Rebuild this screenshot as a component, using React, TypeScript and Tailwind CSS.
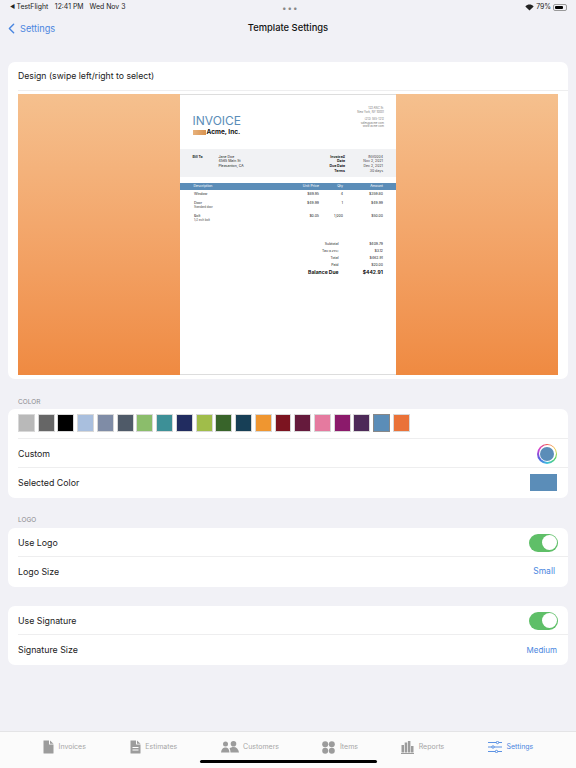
import { ChevronLeft } from "lucide-react"

const swatches = [
  "#b9b9b9", "#666666", "#000000", "#a9bfde", "#7f8ca6", "#4f5a68", "#8bbd6b", "#3d9097", "#212c60",
  "#a0bd4a", "#38642a", "#173f56", "#ef9630", "#7c1420", "#651a3c", "#e57a9f", "#8b1a6b", "#4d2a58",
  "#5b8db8", "#ea7238",
]

const lineItems = [
  { name: "Window", note: "", price: "$89.95", qty: "4", amount: "$359.80", height: "h-[9px]" },
  { name: "Door", note: "Standard door", price: "$49.99", qty: "1", amount: "$49.99", height: "h-[13px]" },
  { name: "Bolt", note: "1/2 inch bolt", price: "$0.05", qty: "1,000", amount: "$50.00", height: "h-[13px]" },
]

const totals = [
  { label: "Subtotal", value: "$409.79" },
  { label: "Tax", value: "$3.12" },
  { label: "Total", value: "$462.91" },
  { label: "Paid", value: "$20.00" },
]

function StatusBar() {
  return (
    <div className="relative flex h-[15px] items-center justify-between pl-[10px] pr-[9px] text-[6.900px] text-[#222]">
      <div className="flex items-center">
        <span className="mr-[1.500px] text-[5.500px]">◀</span>
        <span>TestFlight</span>
        <span className="ml-[6.500px]">12:41 PM</span>
        <span className="ml-[6px]">Wed Nov 3</span>
      </div>
      <div className="absolute left-[282px] top-[2px] text-[8px] tracking-[1px] text-[#888]">•••</div>
      <div className="flex items-center">
        <svg width="9" height="7" viewBox="0 0 20 16" className="mr-[2px]">
          <path d="M10 15 L0.500 5.500 C6 0 14 0 19.500 5.500Z" fill="#222" />
        </svg>
        <span>79%</span>
        <div className="ml-[2px] flex h-[7px] w-[14px] items-center rounded-[2px] border border-[#999] p-[1px]">
          <div className="h-full w-[80%] rounded-[1px] bg-black" />
        </div>
      </div>
    </div>
  )
}

function Toggle() {
  return (
    <div className="flex h-[18px] w-[29px] items-center justify-end rounded-full bg-[#5fbf68] pr-[1.500px]">
      <div className="h-[15px] w-[15px] rounded-full bg-white" />
    </div>
  )
}

function Row({ label, children, border }: { label: string; children: React.ReactNode; border?: boolean }) {
  return (
    <div className={`ml-[10px] flex h-[29.500px] items-center justify-between pr-[10px] ${border ? "border-b border-[#eeeeef] pt-[1.500px]" : ""}`}>
      <span className="text-[8.800px] text-[#222]">{label}</span>
      {children}
    </div>
  )
}

function InvoicePage() {
  return (
    <div className="h-[281px] w-[216px] border-y border-[#dddddd] bg-white text-[#222]">
      <div className="flex h-[54px] justify-between pl-[12.500px] pr-[12px]">
        <div className="pt-[19px]">
          <div className="text-[12px] leading-[14px] text-[#5b8db8]">INVOICE</div>
          <div className="flex items-center">
            <div className="mr-[1px] h-[5px] w-[13px] bg-gradient-to-r from-[#e8b27c] to-[#d8924e]" />
            <span className="text-[6.500px] font-bold leading-[9px] text-[#111]">Acme, Inc.</span>
          </div>
        </div>
        <div className="pt-[12px] text-right text-[2.800px] leading-[3.500px] text-[#777]">
          <div>123 ANC St.</div>
          <div>New York, NY 10001</div>
          <div className="mt-[4px]">(212) 555-1212</div>
          <div>sales@acme.com</div>
          <div>www.acme.com</div>
        </div>
      </div>

      <div className="flex h-[28px] bg-[#f1f2f4] pl-[12.500px] pr-[13px] pt-[5.500px] text-[3.500px] leading-[4.700px]">
        <div className="w-[26px] font-bold">Bill To</div>
        <div className="flex-1">
          <div>Jane Doe</div>
          <div>4565 Main St</div>
          <div>Pleasanton, CA</div>
        </div>
        <div className="w-[19px] text-right font-bold">
          <div>Invoice#</div>
          <div>Date</div>
          <div>Due Date</div>
          <div>Terms</div>
        </div>
        <div className="w-[38px] text-right text-[#444]">
          <div>INV0004</div>
          <div>Nov 2, 2021</div>
          <div>Dec 2, 2021</div>
          <div>30 days</div>
        </div>
      </div>

      <div className="mt-[6px] flex h-[6.500px] items-center bg-[#5b8db8] pl-[13.500px] pr-[13px] text-[3.500px] text-white">
        <div className="flex-1">Description</div>
        <div className="w-[25px] text-right">Unit Price</div>
        <div className="w-[24px] text-right">Qty</div>
        <div className="w-[40px] text-right">Amount</div>
      </div>

      <div className="pt-[2px]">
        {lineItems.map((item) => (
          <div key={item.name} className={`flex pl-[14px] pr-[13px] text-[3.500px] leading-[5px] ${item.height}`}>
            <div className="flex-1">
              <div>{item.name}</div>
              {item.note && <div className="text-[2.800px] leading-[3.500px] text-[#444]">{item.note}</div>}
            </div>
            <div className="w-[25px] text-right">{item.price}</div>
            <div className="w-[24px] text-right">{item.qty}</div>
            <div className="w-[40px] text-right">{item.amount}</div>
          </div>
        ))}
      </div>

      <div className="mt-[14px] pr-[13px] text-[3.500px] leading-[7px]">
        {totals.map((row) => (
          <div key={row.label} className="flex justify-end">
            <div className="mr-[1.500px] text-right">
              {row.label}
              {row.label === "Tax" && <span className="text-[2.600px]"> (6.25%)</span>}
            </div>
            <div className="w-[43px] text-right">{row.value}</div>
          </div>
        ))}
        <div className="flex justify-end text-[5px] font-bold leading-[7px] text-[#111]">
          <div className="mr-[1.500px]">Balance Due</div>
          <div className="w-[43px] text-right">$442.91</div>
        </div>
      </div>
    </div>
  )
}

function TabIcon({ name }: { name: string }) {
  if (name === "Invoices") {
    return (
      <svg width="11" height="14" viewBox="0 0 11 14" fill="#9c9c9c">
        <path d="M0.500 0.500 H6 V4.500 H10.500 V13 a0.500 0.500 0 0 1 -0.500 0.500 H1 a0.500 0.500 0 0 1 -0.500 -0.500Z" />
        <path d="M7 0.500 L10.500 3.700 H7Z" />
      </svg>
    )
  }
  if (name === "Estimates") {
    return (
      <svg width="11" height="14" viewBox="0 0 11 14" fill="#9c9c9c">
        <path d="M0.500 0.500 H6 V4.500 H10.500 V13 a0.500 0.500 0 0 1 -0.500 0.500 H1 a0.500 0.500 0 0 1 -0.500 -0.500Z" />
        <path d="M7 0.500 L10.500 3.700 H7Z" />
        <rect x="2.500" y="7" width="6" height="1" fill="#fff" />
        <rect x="2.500" y="9.500" width="6" height="1" fill="#fff" />
      </svg>
    )
  }
  if (name === "Customers") {
    return (
      <svg width="18" height="12" viewBox="0 0 18 12" fill="#9c9c9c">
        <circle cx="4.500" cy="3" r="2.500" />
        <circle cx="12.500" cy="2.800" r="2.800" />
        <path d="M0 11.500 C0.500 7.500 2.500 6.500 4.500 6.500 C6.500 6.500 8 7.500 8.500 11.500Z" />
        <path d="M8.500 7.500 C9.500 6.500 11 6 12.500 6 C15.500 6 17.500 8 18 11.500 H9.500 C9.500 10 9.200 8.500 8.500 7.500Z" />
      </svg>
    )
  }
  if (name === "Items") {
    return (
      <svg width="13" height="13" viewBox="0 0 13 13" fill="#9c9c9c">
        <circle cx="3.200" cy="3.200" r="3" />
        <circle cx="9.800" cy="3.200" r="3" />
        <circle cx="3.200" cy="9.800" r="3" />
        <circle cx="9.800" cy="9.800" r="3" />
      </svg>
    )
  }
  if (name === "Reports") {
    return (
      <svg width="13" height="13" viewBox="0 0 13 13" fill="#9c9c9c">
        <rect x="0.500" y="4" width="2.500" height="7.500" />
        <rect x="3.700" y="1.500" width="2.500" height="10" />
        <rect x="6.900" y="0" width="2.500" height="11.500" />
        <rect x="10" y="5" width="2.500" height="6.500" />
        <rect x="0" y="12" width="13" height="1" />
      </svg>
    )
  }
  return (
    <svg width="14" height="12" viewBox="0 0 14 12" fill="none" stroke="#4a86e0" strokeWidth="0.900">
      <path d="M0 1.500 H14 M0 6 H14 M0 10.500 H14" />
      <circle cx="9.500" cy="1.500" r="1.200" fill="#fff" />
      <circle cx="5" cy="6" r="1.200" fill="#fff" />
      <circle cx="8.500" cy="10.500" r="1.200" fill="#fff" />
    </svg>
  )
}

// label widths are fixed so the tabs land where the reference has them
const tabs = [
  { name: "Invoices", label: "w-[28px]" },
  { name: "Estimates", label: "w-[32px]" },
  { name: "Customers", label: "w-[36px]" },
  { name: "Items", label: "w-[18px]" },
  { name: "Reports", label: "w-[26px]" },
  { name: "Settings", label: "w-[28px]" },
]

export default function App() {
  return (
    <div className="relative flex h-[768px] w-[576px] flex-col overflow-hidden bg-[#f1f1f6] font-['Inter',sans-serif]">
      <StatusBar />

      <div className="relative mt-[5px] flex h-[16px] items-center justify-center">
        <div className="absolute left-[3px] top-0 flex items-center text-[#4a86e0]">
          <ChevronLeft size={17} strokeWidth={2} />
          <span className="text-[9.200px]">Settings</span>
        </div>
        <span className="text-[9.400px] font-medium text-[#111]">Template Settings</span>
      </div>

      <div className="mx-[8px] mt-[26px] rounded-[7px] bg-white">
        <div className="ml-[10px] flex h-[28.500px] items-center border-b border-[#eeeeef] pt-[1px] text-[8.700px] text-[#222]">
          Design (swipe left/right to select)
        </div>
        <div className="px-[10px] pb-[4px] pt-[3.500px]">
          <div className="flex h-[281px] justify-center bg-gradient-to-b from-[#f5c08e] to-[#ef8a41]">
            <InvoicePage />
          </div>
        </div>
      </div>

      <div className="ml-[18px] mt-[19px] text-[6.500px] leading-[9px] text-[#8a8a8e]">COLOR</div>
      <div className="mx-[8px] mt-[2px] rounded-[7px] bg-white">
        <div className="ml-[10px] flex h-[29.500px] items-center gap-[2.850px] border-b border-[#eeeeef]">
          {swatches.map((color) => (
            <div
              key={color}
              className={`h-[18px] w-[16.900px] border-[1px] ${color === "#5b8db8" ? "border-[#888]" : "border-[#d8d8d8]"}`}
              style={{ backgroundColor: color }}
            />
          ))}
        </div>
        <Row label="Custom" border>
          <div className="mr-[1px] flex h-[20px] w-[20px] items-center justify-center rounded-full bg-[conic-gradient(#f05050,#f0d040,#50d060,#40c0e0,#5060e0,#d040d0,#f05050)]">
            <div className="flex h-[17px] w-[17px] items-center justify-center rounded-full bg-white">
              <div className="h-[14px] w-[14px] rounded-full bg-[#5b8db8]" />
            </div>
          </div>
        </Row>
        <Row label="Selected Color">
          <div className="mr-[1px] h-[17px] w-[27px] bg-[#5b8db8]" />
        </Row>
      </div>

      <div className="ml-[18px] mt-[18px] text-[6.500px] leading-[9px] text-[#8a8a8e]">LOGO</div>
      <div className="mx-[8px] mt-[3px] rounded-[7px] bg-white">
        <Row label="Use Logo" border>
          <Toggle />
        </Row>
        <Row label="Logo Size">
          <span className="mr-[3px] text-[8.500px] text-[#4a86e0]">Small</span>
        </Row>
      </div>

      <div className="mx-[8px] mt-[19px] rounded-[7px] bg-white">
        <Row label="Use Signature" border>
          <Toggle />
        </Row>
        <Row label="Signature Size">
          <span className="mr-[1px] text-[8px] text-[#4a86e0]">Medium</span>
        </Row>
      </div>

      <div className="absolute bottom-0 left-0 right-0 h-[37px] border-t border-[#e4e4e6] bg-[#fbfbfb]">
        <div className="flex h-[30px] items-center gap-[43.300px] pl-[43px]">
          {tabs.map((tab) => (
            <div key={tab.name} className="flex items-center gap-[4.500px]">
              <TabIcon name={tab.name} />
              <span className={`whitespace-nowrap text-[7px] ${tab.label} ${tab.name === "Settings" ? "text-[#4a86e0]" : "text-[#a6a6a6]"}`}>{tab.name}</span>
            </div>
          ))}
        </div>
      </div>
      <div className="absolute bottom-[5px] left-[200px] h-[3px] w-[177px] rounded-full bg-black" />
    </div>
  )
}
